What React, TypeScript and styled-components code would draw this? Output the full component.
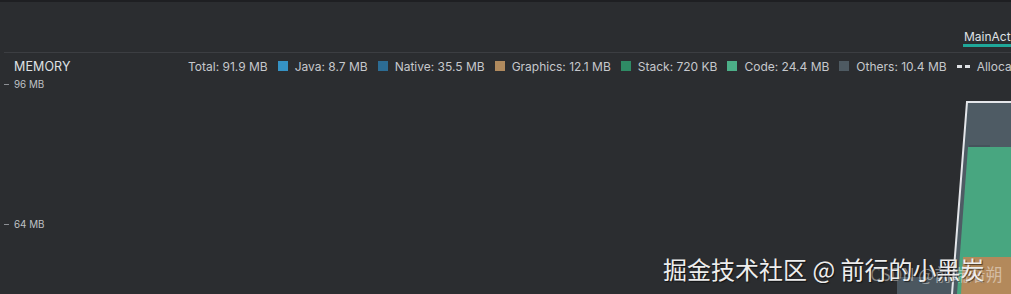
import React from "react";
import styled, { createGlobalStyle } from "styled-components";

const GlobalStyle = createGlobalStyle`
  html, body { margin: 0; padding: 0; background: #2b2d30; }
  body { font-family: Inter, "Noto Sans", "Liberation Sans", sans-serif; }
`;

const Root = styled.div`
  position: relative;
  width: 1011px;
  height: 294px;
  overflow: hidden;
  background: #2b2d30;
  border-top: 2px solid #1e1f22;
  box-sizing: border-box;
  display: flex;
  flex-direction: column;
`;

const TopBar = styled.div`
  height: 50px;
  flex-shrink: 0;
  display: flex;
  justify-content: flex-end;
  align-items: flex-end;
  padding-bottom: 5px;
  box-sizing: border-box;
`;

const Tab = styled.div`
  width: 48px;
  overflow: hidden;
  white-space: nowrap;
  display: flex;
  flex-direction: column;
  gap: 0px;
`;

const TabLabel = styled.span`
  font-size: 12px;
  line-height: 14px;
  color: #dfe1e5;
  padding-left: 1px;
`;

const TabUnderline = styled.div`
  height: 3px;
  background: #1fa799;
`;

const Divider = styled.div`
  margin-left: 4px;
  height: 1px;
  flex-shrink: 0;
  background: #3c3e42;
`;

const Header = styled.div`
  height: 26px;
  flex-shrink: 0;
  display: flex;
  align-items: center;
  padding-left: 14px;
  white-space: nowrap;
`;

const Title = styled.span`
  width: 174px;
  flex-shrink: 0;
  font-size: 12.5px;
  color: #dfe1e5;
  letter-spacing: 0.1px;
`;

const Legend = styled.div`
  display: flex;
  align-items: center;
  gap: 10px;
  flex-shrink: 0;
`;

const LegendItem = styled.div`
  display: flex;
  align-items: center;
  gap: 7px;
  font-size: 12px;
  color: #c6c8cc;
`;

const Swatch = styled.span<{ $color: string }>`
  width: 10px;
  height: 10px;
  background: ${(p) => p.$color};
  display: inline-block;
`;

const Dashes = styled.span`
  width: 13px;
  height: 3px;
  display: inline-block;
  background: linear-gradient(to right, #dfe1e5 0 5px, transparent 5px 8px, #dfe1e5 8px 13px);
`;

const ChartArea = styled.div`
  position: relative;
  flex: 1;
`;

const Axis = styled.div`
  position: relative;
  z-index: 1;
  display: flex;
  flex-direction: column;
  gap: 126px;
  margin-top: -2px;
`;

const AxisLabel = styled.div`
  display: flex;
  align-items: center;
  gap: 5px;
  padding-left: 4px;
  height: 14px;
  font-size: 9.8px;
  color: #bfc1c5;
`;

const Tick = styled.span`
  width: 5px;
  height: 1px;
  background: #8c8f94;
`;

const ChartSvg = styled.svg`
  position: absolute;
  inset: 0;
`;

const Watermark = styled.div`
  position: absolute;
  left: 663px;
  top: 252px;
  font-family: "Noto Sans CJK SC", "Noto Sans", sans-serif;
  font-size: 24px;
  line-height: 30px;
  color: #ededed;
  text-shadow: 1px 1px 1px rgba(0, 0, 0, 0.6);
  white-space: nowrap;
  z-index: 3;
`;

const Watermark2 = styled.div`
  position: absolute;
  left: 870px;
  top: 259px;
  font-family: "Noto Sans CJK SC", "Noto Sans", sans-serif;
  font-size: 17px;
  line-height: 26px;
  color: rgba(255, 255, 255, 0.45);
  white-space: nowrap;
  z-index: 2;
`;

const legend = [
  { label: "Java: 8.7 MB", color: "#3592c4" },
  { label: "Native: 35.5 MB", color: "#2c6c94" },
  { label: "Graphics: 12.1 MB", color: "#b08a5e" },
  { label: "Stack: 720 KB", color: "#2f8b65" },
  { label: "Code: 24.4 MB", color: "#4caf88" },
  { label: "Others: 10.4 MB", color: "#4e5a62" },
];

export default function App() {
  return (
    <>
      <GlobalStyle />
      <Root>
        <TopBar>
          <Tab>
            <TabLabel>MainActivity</TabLabel>
            <TabUnderline />
          </Tab>
        </TopBar>
        <Divider />
        <Header>
          <Title>MEMORY</Title>
          <Legend>
            <LegendItem>Total: 91.9 MB</LegendItem>
            {legend.map((l) => (
              <LegendItem key={l.label}>
                <Swatch $color={l.color} />
                {l.label}
              </LegendItem>
            ))}
            <LegendItem>
              <Dashes />
              Allocations
            </LegendItem>
          </Legend>
        </Header>
        <ChartArea>
          <ChartSvg width="1011" height="215" viewBox="0 79 1011 215">
            <polygon points="897,277 952,277 952,294 897,294" fill="#4b5760" />
            <polygon points="967,102 1011,102 1011,294 952,294" fill="#4e5b64" />
            <polygon points="968,147 1011,147 1011,294 957,294" fill="#48a680" />
            <polygon points="963,257 1011,257 1011,294 961,294" fill="#b3895b" />
            <line x1="969" y1="146" x2="990" y2="146" stroke="#3f4a52" strokeWidth="1" />
            <polyline points="1011,102 967,102 952,294" fill="none" stroke="#e4e6ea" strokeWidth="2" />
          </ChartSvg>
          <Axis>
            <AxisLabel>
              <Tick />
              96 MB
            </AxisLabel>
            <AxisLabel>
              <Tick />
              64 MB
            </AxisLabel>
          </Axis>
        </ChartArea>
        <Watermark2>CSDN @前端沿朔</Watermark2>
        <Watermark>掘金技术社区 @ 前行的小黑炭</Watermark>
      </Root>
    </>
  );
}
